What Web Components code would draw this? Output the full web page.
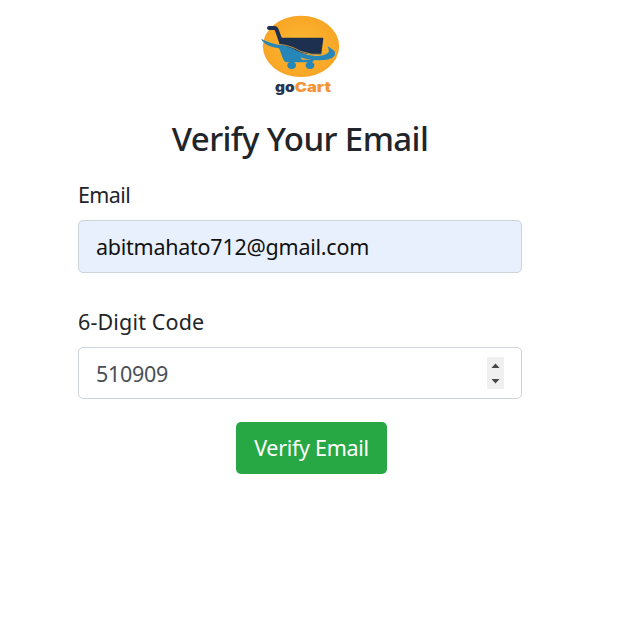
<!DOCTYPE html>
<html lang="en">
<head>
<meta charset="utf-8">
<title>Verify Your Email</title>
<style>
html, body { margin: 0; background: #fff; }
body { font-family: "Noto Sans", "Open Sans", sans-serif; color: #212529; }
</style>
</head>
<body>
<verify-page></verify-page>
<script>
function define(name, html) {
  const template = document.createElement('template');
  template.innerHTML = html;
  customElements.define(name, class extends HTMLElement {
    constructor() {
      super();
      this.attachShadow({ mode: 'open' }).append(template.content.cloneNode(true));
    }
  });
}

define('cart-logo', `
<style>
:host { display: block; width: 100px; height: 100px; }
svg { display: block; }
text { font: 900 41px Inter, "DejaVu Sans", sans-serif; }
</style>
<svg width="100" height="100" viewBox="0 0 300 300" role="img" aria-label="goCart">
  <defs>
    <radialGradient id="sun"><stop offset="0" stop-color="#fdba30"/><stop offset="1" stop-color="#f8a526"/></radialGradient>
  </defs>
  <ellipse cx="153" cy="124" rx="114.500" ry="92" fill="url(#sun)"/>
  <path d="M57 69 H73 Q78 69 80 74 L90 102 L95 118" fill="none" stroke="#1d304f" stroke-width="12" stroke-linecap="round" stroke-linejoin="round"/>
  <path d="M88 100 H218 L212 147 Q171 148 133 135 L92 120 Z" fill="#1d304f" stroke="#1d304f" stroke-width="4" stroke-linejoin="round"/>
  <path d="M84 121 L125 134 L150 154 L156 164 H180 Q186 163 190 157 L196 160 Q192 171 182 172 H110 Q103 171 100 164 Z" fill="#2786b8"/>
  <path d="M33 101 Q61 116 99 121 Q125 127 149 142 Q184 157 220 151 Q246 144 232 124 Q261 137 254 152 Q238 169 193 165 Q152 162 121 145 Q98 131 70 127 Q39 117 33 101 Z" fill="#2786b8"/>
  <path d="M86 118 Q123 121 151 139 Q185 152 220 148" fill="none" stroke="#d9a84a" stroke-width="2.500"/>
  <ellipse cx="125" cy="181" rx="13" ry="11" fill="#2786b8"/>
  <ellipse cx="180" cy="181" rx="13" ry="11" fill="#2786b8"/>
  <text x="75" y="260" fill="#263652" textLength="59" lengthAdjust="spacingAndGlyphs">go</text>
  <text x="134" y="260" fill="#f49434" textLength="109" lengthAdjust="spacingAndGlyphs">Cart</text>
</svg>`);

define('page-title', `
<style>
:host { display: block; }
h1 { margin: 0; font-size: 33px; line-height: 42px; font-weight: 500; text-align: center; white-space: nowrap; letter-spacing: -0.600px; }
</style>
<h1><slot></slot></h1>`);

define('form-field', `
<style>
:host { display: block; }
.label { font-size: 21.500px; line-height: 32px; letter-spacing: var(--label-track, 0); }
.box { box-sizing: border-box; display: flex; align-items: center; justify-content: space-between;
  margin-top: 9px; height: var(--box-height, 53px); padding: 0 17px; border: 1px solid #ced4da; border-radius: 5px;
  background: var(--fill, #fff); color: var(--ink, #495057); font-size: 21.500px; letter-spacing: var(--value-track, 0); }
</style>
<div class="label"><slot name="label"></slot></div>
<div class="box"><span><slot></slot></span><slot name="control"></slot></div>`);

define('number-spinner', `
<style>
:host { display: block; width: 17px; height: 32px; background: #f0f0f0; }
svg { display: block; }
</style>
<svg width="17" height="32" viewBox="0 0 17 32" fill="#484848"><path d="M4.500 11 L8.500 6.500 L12.500 11 Z"/><path d="M4.500 22 L8.500 26.500 L12.500 22 Z"/></svg>`);

define('action-button', `
<style>
:host { display: block; }
button { display: block; width: 151px; height: 52px; padding: 0; border: 0; border-radius: 5px; background: #28a745; color: #fff;
  font-family: inherit; font-size: 21.500px; line-height: 52px; white-space: nowrap; letter-spacing: -0.300px; }
</style>
<button type="button"><slot></slot></button>`);

define('verify-page', `
<style>
:host { display: flex; flex-direction: column; box-sizing: border-box; height: 628px; padding: 5px 100px 0 78px; }
cart-logo { align-self: center; }
page-title { margin-top: 13px; }
.email { margin-top: 19px; --fill: #e8f0fe; --ink: #111; --label-track: -0.600px; --value-track: -0.250px; }
.code { margin-top: 33px; --box-height: 52px; --label-track: 0.150px; --value-track: -0.300px; }
action-button { align-self: center; margin: 23px 0 0 23px; }
</style>
<cart-logo></cart-logo>
<page-title>Verify Your Email</page-title>
<form-field class="email"><span slot="label">Email</span>abitmahato712@gmail.com</form-field>
<form-field class="code"><span slot="label">6-Digit Code</span>510909<number-spinner slot="control"></number-spinner></form-field>
<action-button>Verify Email</action-button>`);
</script>
</body>
</html>
